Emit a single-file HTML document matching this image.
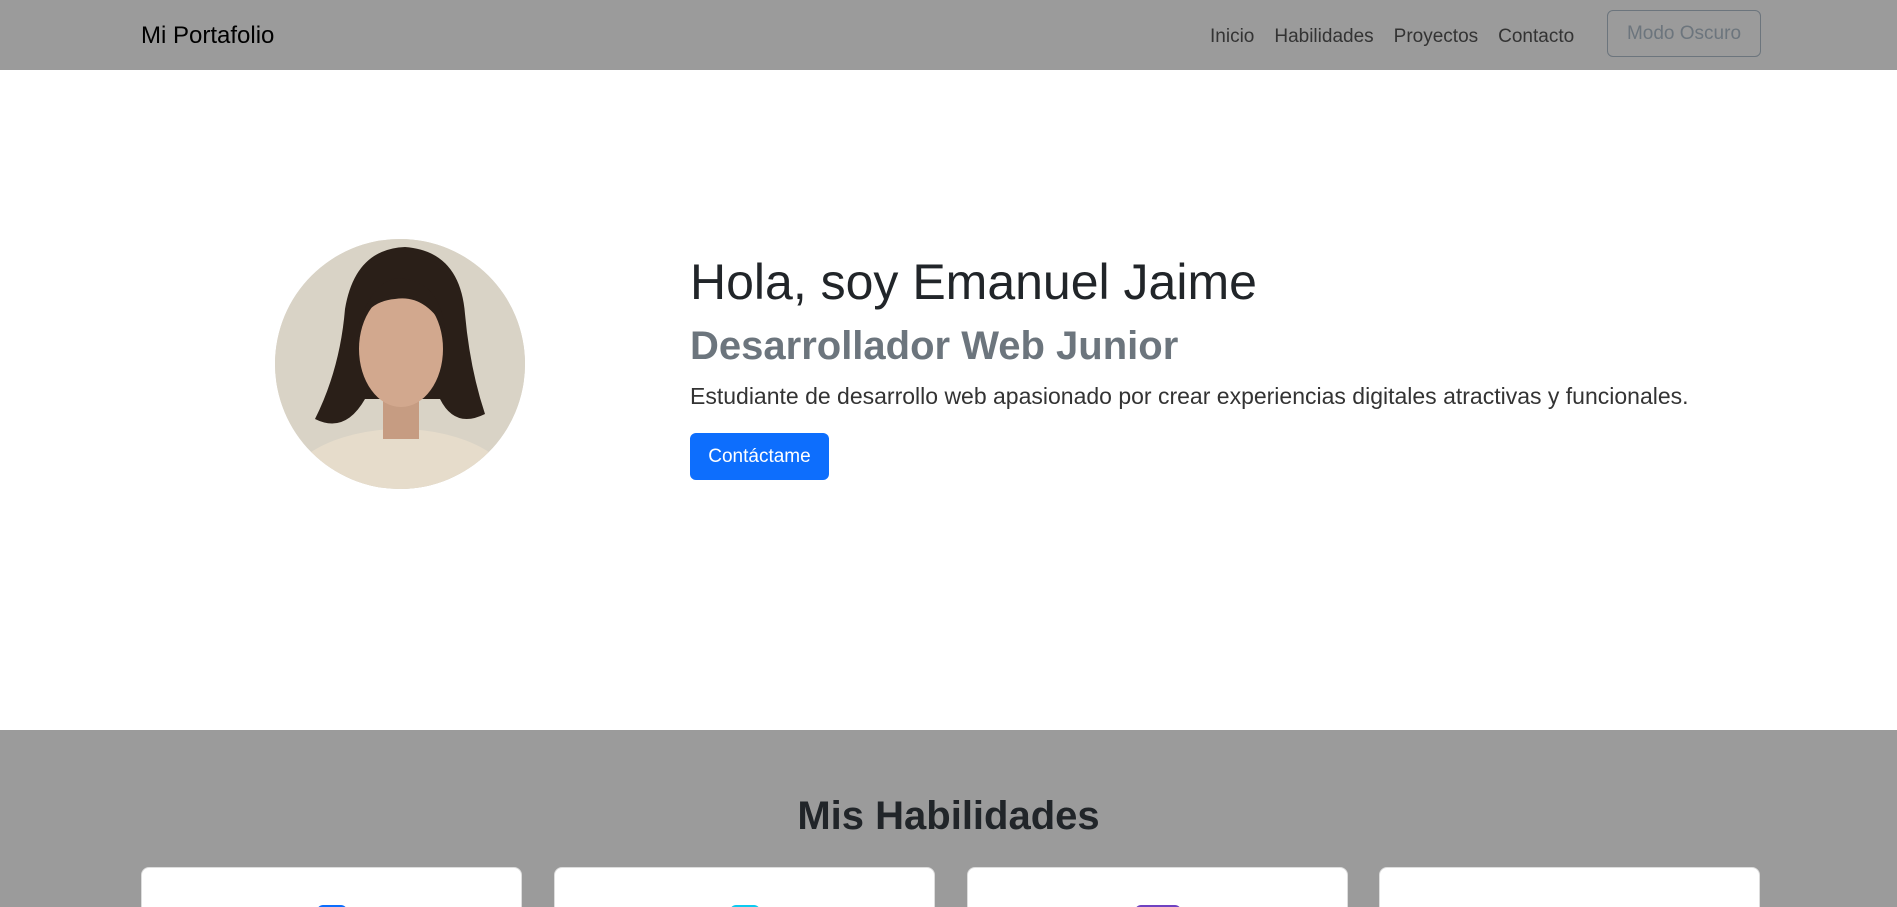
<!DOCTYPE html>
<html style="overflow:hidden"><head><meta charset="utf-8"><style>
*{margin:0;padding:0;box-sizing:border-box}
body{width:1897px;height:907px;overflow:hidden;font-family:"Liberation Sans",sans-serif;background:#fff;color:#212529;position:relative}
.nav{position:absolute;left:0;top:0;width:1897px;height:70px;background:#9b9b9b}
.brand{position:absolute;left:141px;top:22px;font-size:24px;color:#000}
.links{position:absolute;left:1210px;top:26px;font-size:19px;color:#333}
.links span{margin-right:20px}
.mbtn{position:absolute;left:1607px;top:10px;width:154px;height:47px;border:1px solid #6c757d;border-radius:6px;color:#6c757d;font-size:19px;text-align:center;line-height:45px}
.photo{position:absolute;left:275px;top:239px;width:250px;height:250px;border-radius:50%;overflow:hidden;background:#d8d2c4}
h1{position:absolute;left:690px;top:253px;font-size:50px;font-weight:500}
h2{position:absolute;left:690px;top:324px;font-size:40px;font-weight:700;color:#6c757d}
p{position:absolute;left:690px;top:383px;font-size:23px;font-weight:300;color:#333}
.cbtn{position:absolute;left:690px;top:433px;width:139px;height:47px;background:#0d6efd;border-radius:6px;color:#fff;font-size:19px;text-align:center;line-height:47px}
.sec{position:absolute;left:0;top:730px;width:1897px;height:177px;background:#9b9b9b;overflow:hidden}
.sec h3{position:absolute;width:100%;text-align:center;top:64px;font-size:40px;font-weight:700;color:#212529}
.card{position:absolute;top:137px;width:381px;height:60px;background:#fff;border-radius:8px;border:1px solid #ddd}
.ic{position:absolute;top:37px;width:30px;height:20px;border-radius:6px;left:50%;margin-left:-15px}
</style></head><body>
<div class="nav"><div class="brand">Mi Portafolio</div>
<div class="links"><span>Inicio</span><span>Habilidades</span><span>Proyectos</span><span>Contacto</span></div>
<div class="mbtn">Modo Oscuro</div></div>
<div class="photo"><svg width="250" height="250" viewBox="0 0 250 250">
<rect width="250" height="250" fill="#d9d3c6"/>
<ellipse cx="125" cy="260" rx="120" ry="70" fill="#e6dccb"/>
<path d="M70 70 Q80 10 130 8 Q185 12 190 75 Q195 130 210 175 Q180 190 165 160 L90 160 Q70 195 40 180 Q65 130 70 70Z" fill="#2a1f18"/>
<rect x="108" y="150" width="36" height="50" fill="#c69c82"/>
<ellipse cx="126" cy="110" rx="42" ry="58" fill="#d2a88e"/>
<path d="M84 85 Q100 35 130 40 Q165 45 170 90 Q150 55 120 60 Q95 62 84 85Z" fill="#2a1f18"/>
</svg></div>
<h1>Hola, soy Emanuel Jaime</h1>
<h2>Desarrollador Web Junior</h2>
<p>Estudiante de desarrollo web apasionado por crear experiencias digitales atractivas y funcionales.</p>
<div class="cbtn">Contáctame</div>
<div class="sec"><h3>Mis Habilidades</h3>
<div class="card" style="left:141px"><div class="ic" style="background:#0d6efd"></div></div>
<div class="card" style="left:554px"><div class="ic" style="background:#0dcaf0"></div></div>
<div class="card" style="left:967px"><div class="ic" style="background:#6f42c1;width:46px;margin-left:-23px"></div></div>
<div class="card" style="left:1379px"></div>
</div>
</body></html>
